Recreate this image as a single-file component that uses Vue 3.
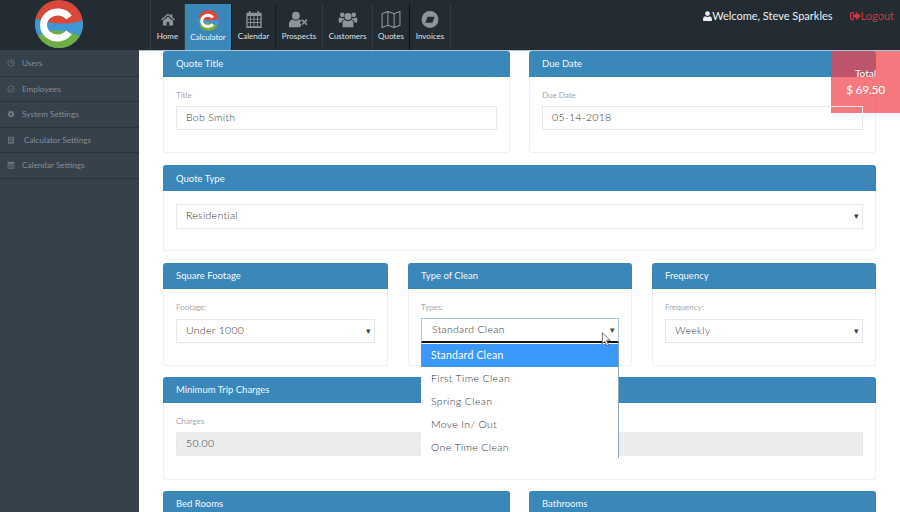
<script setup>
const side = [
  { label: 'Users', icon: 'clock' },
  { label: 'Employees', icon: 'check' },
  { label: 'System Settings', icon: 'gear' },
  { label: 'Calculator Settings', icon: 'calc', wide: true },
  { label: 'Calendar Settings', icon: 'cal' }
]
const nav = [
  { label: 'Home', icon: 'home', w: 34 },
  { label: 'Calculator', icon: 'logo', w: 47, active: true },
  { label: 'Calendar', icon: 'cal', w: 44, dark: true },
  { label: 'Prospects', icon: 'userx', w: 47 },
  { label: 'Customers', icon: 'users', w: 50 },
  { label: 'Quotes', icon: 'map', w: 37, black: true },
  { label: 'Invoices', icon: 'compass', w: 41 }
]
const options = ['Standard Clean', 'First Time Clean', 'Spring Clean', 'Move In/ Out', 'One Time Clean']
</script>

<template>
  <div class="page">
    <header class="top">
      <div class="brand">
        <svg class="logo" viewBox="0 0 48 48">
          <defs>
            <clipPath id="logoClip"><circle cx="24" cy="24" r="24" /></clipPath>
          </defs>
          <g clip-path="url(#logoClip)">
            <rect width="48" height="48" fill="#d9483b" />
            <path d="M0 18 C12 24 34 26 48 20 V48 H0Z" fill="#3e97d3" />
            <path d="M0 38 C14 28 32 28 48 38 V48 H0Z" fill="#6fae45" />
          </g>
          <path d="M34 17.500 A14 13 0 1 0 34 32.500" fill="none" stroke="#fff" stroke-width="7" />
        </svg>
      </div>
      <nav class="nav">
        <div v-for="n in nav" :key="n.label" class="nav-item" :class="{ active: n.active, dark: n.dark, black: n.black }" :style="{ width: n.w + 'px' }">
          <svg v-if="n.icon === 'home'" class="ni" viewBox="-4 -3 32 27"><path d="M12 1 1 10.500l1.300 1.400L12 3.800l9.700 8.100 1.300-1.400-4-3.400V2h-3v2.500zM4 12.500V20h6v-5.500h4V20h6v-7.500L12 6z" /></svg>
          <svg v-else-if="n.icon === 'logo'" class="ni logo-small" viewBox="0 0 48 48">
            <g clip-path="url(#logoClip)">
              <rect width="48" height="48" fill="#d9483b" />
              <path d="M0 18 C12 24 34 26 48 20 V48 H0Z" fill="#3e97d3" />
              <path d="M0 38 C14 28 32 28 48 38 V48 H0Z" fill="#6fae45" />
            </g>
            <path d="M34 17.500 A14 13 0 1 0 34 32.500" fill="none" stroke="#fff" stroke-width="7" />
          </svg>
          <svg v-else-if="n.icon === 'cal'" class="ni" viewBox="0 0 18 20"><path fill-rule="evenodd" d="M3 0h2v2h8V0h2v2h3v18H0V2h3zM1.500 6v3h3V6zm4 0v3h3V6zm4 0v3h3V6zm4 0v3h3V6zm-12 4v3h3v-3zm4 0v3h3v-3zm4 0v3h3v-3zm4 0v3h3v-3zm-12 4v4h3v-4zm4 0v4h3v-4zm4 0v4h3v-4zm4 0v4h3v-4z" /></svg>
          <svg v-else-if="n.icon === 'userx'" class="ni" viewBox="0 -1 26 22"><circle cx="9" cy="5" r="5" /><path d="M0 20v-4c0-4 3-6 5-6 1 1 2.500 1.500 4 1.500s3-.5 4-1.500c1 0 2 .5 3 1.500l-2 3 2 2.500-1.500 3z" /><path d="m16 11 1.500-1.500 2.500 2.500 2.500-2.500L24 11l-2.500 2.500L24 16l-1.500 1.500-2.500-2.500-2.500 2.500L16 16l2.500-2.500z" /></svg>
          <svg v-else-if="n.icon === 'users'" class="ni" viewBox="-1 -1 26 22"><circle cx="12" cy="6" r="4.500" /><circle cx="4.500" cy="4" r="3" /><circle cx="19.500" cy="4" r="3" /><path d="M5 20v-6c0-2.500 1.500-3.500 3-3.500 1 1 2.500 1.500 4 1.500s3-.5 4-1.500c1.500 0 3 1 3 3.500v6z" /><path d="M0 14V9.500C0 8 1 7.500 2 7.500c.7.600 1.600.9 2.500.9h2.200a6 6 0 0 0 .8 2C5 10.500 3.800 12 3.800 14zM24 14V9.500c0-1.500-1-2-2-2-.7.600-1.600.9-2.500.9h-2.200a6 6 0 0 1-.8 2c2.500.1 3.700 1.600 3.700 3.600z" /></svg>
          <svg v-else-if="n.icon === 'map'" class="ni" viewBox="0.500 0.500 21 19"><path d="M1 3.500 7.500 1l7 2.500L21 1v15.500L14.500 19l-7-2.500L1 19zM7.500 1v15.500M14.500 3.500V19" fill="none" stroke="#8f9498" stroke-width="1.200" /></svg>
          <svg v-else-if="n.icon === 'compass'" class="ni" viewBox="1 1 18 18"><path fill-rule="evenodd" d="M10 1a9 9 0 1 1 0 18 9 9 0 0 1 0-18zM7.500 7l-2.500 6.500h7.500L15 7z" /></svg>
          <span>{{ n.label }}</span>
        </div>
      </nav>
      <div class="user">
        <span class="welcome">
          <svg class="ui" viewBox="0 0 14 16"><circle cx="7" cy="4" r="3.800" /><path d="M0 16v-3.500C0 10 2 8.500 3.500 8.500c1 .8 2.200 1.200 3.500 1.200s2.500-.4 3.500-1.200c1.500 0 3.500 1.500 3.500 4V16z" /></svg>Welcome, Steve Sparkles
        </span>
        <span class="logout">
          <svg class="ui" viewBox="0 0 16 14"><path d="M6 1H3a3 3 0 0 0-3 3v6a3 3 0 0 0 3 3h3v-2H3a1 1 0 0 1-1-1V4a1 1 0 0 1 1-1h3z" /><path d="M9 1l7 6-7 6V9.500H4.500v-5H9z" /></svg>Logout
        </span>
      </div>
    </header>

    <div class="body">
      <aside class="side">
        <div v-for="s in side" :key="s.label" class="side-item">
          <svg class="si" viewBox="0 0 12 12">
            <g v-if="s.icon === 'clock'" fill="none" stroke="#69727a" stroke-width="1.300"><circle cx="6" cy="6" r="4.800" /><path d="M6 3v3h2" /></g>
            <g v-else-if="s.icon === 'check'" fill="none" stroke="#69727a" stroke-width="1.300"><circle cx="6" cy="6" r="4.800" /><path d="m3.800 6 1.700 1.700 3-3" /></g>
            <g v-else-if="s.icon === 'gear'" fill="none" stroke="#7b848b"><circle cx="6" cy="6" r="3" stroke-width="2.200" /><path d="M6 .8v2M6 9.200v2M.8 6h2M9.200 6h2M2.300 2.300l1.400 1.400M8.300 8.300l1.400 1.400M2.300 9.700l1.400-1.400M8.300 3.700l1.400-1.400" stroke-width="1.500" /></g>
            <g v-else-if="s.icon === 'calc'" fill="#69727a"><path fill-rule="evenodd" d="M1.500 1h9v10.500h-9zM3 2.500V4h6V2.500zM3 5.500V7h1.500V5.500zm2.300 0V7h1.500V5.500zm2.200 0V7H9V5.500zM3 8v1.500h1.500V8zm2.300 0v1.500h1.500V8zm2.200 0v1.500H9V8z" /></g>
            <g v-else fill="#69727a"><path fill-rule="evenodd" d="M3 .5h1.300v1h3.400v-1H9v1h2v10H1v-10h2zM2.200 4.500v2h2v-2zm2.800 0v2h2v-2zm2.800 0v2h2v-2zM2.200 7.500v2.800h2V7.500zm2.800 0v2.800h2V7.500zm2.800 0v2.800h2V7.500z" /></g>
          </svg>
          <span :class="{ wide: s.wide }">{{ s.label }}</span>
        </div>
      </aside>

      <main class="main">
        <div class="total">
          <span class="total-label">Total</span>
          <span class="total-value">$ 69.50</span>
        </div>

        <div class="row two">
          <section class="panel">
            <h3>Quote Title</h3>
            <div class="pb short">
              <label>Title</label>
              <div class="input">Bob Smith</div>
            </div>
          </section>
          <section class="panel">
            <h3>Due Date</h3>
            <div class="pb short">
              <label>Due Date</label>
              <div class="input">05-14-2018</div>
            </div>
          </section>
        </div>

        <section class="panel type">
          <h3>Quote Type</h3>
          <div class="pb nolabel">
            <div class="input select">Residential<i class="caret">▾</i></div>
          </div>
        </section>

        <div class="row three">
          <section class="panel">
            <h3>Square Footage</h3>
            <div class="pb">
              <label>Footage:</label>
              <div class="input select">Under 1000<i class="caret">▾</i></div>
            </div>
          </section>
          <section class="panel">
            <h3>Type of Clean</h3>
            <div class="pb">
              <label>Types:</label>
              <div class="drop-wrap">
                <div class="input select focus">Standard Clean<i class="caret">▾</i></div>
                <ul class="menu">
                  <li v-for="(o, i) in options" :key="o" :class="{ sel: i === 0 }">{{ o }}</li>
                </ul>
                <svg class="cursor" viewBox="0 0 12 18"><path d="M1 1v13l3-3 2.500 5.500 2-1L6 10h4.500z" fill="#fff" stroke="#555" stroke-width="1" /></svg>
              </div>
            </div>
          </section>
          <section class="panel">
            <h3>Frequency</h3>
            <div class="pb">
              <label>Frequency:</label>
              <div class="input select">Weekly<i class="caret">▾</i></div>
            </div>
          </section>
        </div>

        <section class="panel charges">
          <h3>Minimum Trip Charges</h3>
          <div class="pb">
            <label>Charges</label>
            <div class="input readonly">50.00</div>
          </div>
        </section>

        <div class="row two">
          <section class="panel"><h3>Bed Rooms</h3></section>
          <section class="panel"><h3>Bathrooms</h3></section>
        </div>
      </main>
    </div>
  </div>
</template>

<style>
html, body { margin: 0; background: #fff; }
</style>

<style scoped>
.page {
  width: 900px;
  height: 512px;
  overflow: hidden;
  display: flex;
  flex-direction: column;
  font-family: Lato, "Open Sans", sans-serif;
  color: #555;
}
.top {
  height: 50px;
  flex: none;
  background: #232c33;
  display: flex;
}
.brand { width: 150px; flex: none; padding-left: 35px; box-sizing: border-box; }
.logo { width: 48px; height: 48px; display: block; }
.nav { display: flex; align-items: stretch; height: 50px; border-left: 1px solid #323c44; box-sizing: border-box; }
.nav-item {
  box-sizing: border-box;
  height: 46px;
  margin-top: 4px;
  display: flex;
  flex-direction: column;
  align-items: center;
  justify-content: flex-start;
  padding-top: 7px;
  color: #dfe3e5;
  font-size: 8px;
  border-right: 1px solid #323c44;
  white-space: nowrap;
}
.nav-item.active { background: #3a87ba; border-right-color: #10161a; color: #eef5fa; padding-top: 6px; }
.nav-item.active span { margin-top: 1px; }
.nav-item.dark { border-right-color: #161c21; }
.nav-item.black { border-right-color: #0c1114; }
.nav-item span { margin-top: 3px; line-height: 11px; }
.ni { height: 17px; width: 24px; fill: #8f9498; display: block; flex: none; }
.logo-small { height: 21px; width: 21px; }
.user {
  margin-left: auto;
  padding: 9px 6px 0 0;
  display: flex;
  gap: 17px;
  font-size: 11px;
  line-height: 14px;
  align-items: flex-start;
}
.welcome { color: #eef0f1; display: flex; align-items: center; }
.logout { color: #c9383a; display: flex; align-items: center; }
.ui { width: 9px; height: 10px; fill: currentColor; }
.logout .ui { width: 11px; }

.body { flex: 1; display: flex; min-height: 0; }
.side {
  width: 139px;
  flex: none;
  background: #36414b;
  padding-top: 1px;
  box-sizing: border-box;
}
.side-item {
  height: 25.500px;
  box-sizing: border-box;
  border-bottom: 1px solid #29323a;
  display: flex;
  align-items: center;
  padding-left: 7px;
  gap: 7px;
  font-size: 8.200px;
  color: #858e95;
}
.side-item span.wide { margin-left: 2px; }
.si { width: 8px; height: 8px; flex: none; }

.main {
  flex: 1;
  position: relative;
  padding: 0 24px;
  min-width: 0;
  display: flex;
  flex-direction: column;
  border-top: 1px solid #a9c7d6;
}
.total {
  position: absolute;
  top: 0;
  right: 0;
  width: 69px;
  height: 62px;
  background: rgba(240, 68, 76, 0.72);
  color: #fff;
  display: flex;
  flex-direction: column;
  align-items: center;
  padding-top: 16px;
  box-sizing: border-box;
}
.total-label { font-size: 10px; line-height: 13px; }
.total-value { font-size: 12px; line-height: 16px; margin-top: 2px; letter-spacing: -.3px; }

.row { display: grid; gap: 19px; margin-bottom: 12px; }
.two { grid-template-columns: 347px 347px; }
.three { grid-template-columns: 225px 225px 1fr; margin-bottom: 11px; }
.three > .panel:nth-child(2) { margin-left: 1px; }
.three > .panel:nth-child(3) { margin-left: 1px; }
.three .input { line-height: 21px; }
.panel {
  background: #fff;
  border: 1px solid #eef0f1;
  border-top: 0;
  border-radius: 3px;
  box-sizing: border-box;
}
.panel h3 {
  margin: 0 -1px;
  height: 26px;
  background: #3a87ba;
  color: #f4f8fb;
  font-size: 9.500px;
  font-weight: 400;
  line-height: 26px;
  padding-left: 13px;
  border-radius: 3px 3px 0 0;
}
.type h3 { line-height: 27px; }
.pb { padding: 13px 12px 0; height: 76px; box-sizing: border-box; }
.pb.short { height: 75px; }
.pb.nolabel { padding-top: 13px; height: 59px; }
.pb.nolabel .input { height: 25px; line-height: 21px; }
.type { margin-bottom: 12px; }
.charges { margin-bottom: 11px; }
.panel label { display: block; font-size: 8px; color: #a4a8ac; line-height: 11px; margin-bottom: 5px; }
.three label { margin-bottom: 6px; }
.input {
  height: 24px;
  box-sizing: border-box;
  border: 1px solid #e6e8ea;
  padding-left: 9px;
  font-size: 10.500px;
  font-weight: 300;
  line-height: 21px;
  color: #333;
  position: relative;
  letter-spacing: .3px;
}
.select .caret {
  position: absolute;
  right: 3px;
  top: 0;
  font-style: normal;
  font-size: 9px;
  color: #444;
}
.readonly { background: #eaecee; }
.focus { border-color: #a9c6df; border-bottom: 2px solid #111; height: 25px; margin-top: -1px; line-height: 21px; padding-left: 10px; }
.drop-wrap { position: relative; }
.menu {
  position: absolute;
  left: 0;
  top: 25px;
  width: 198px;
  height: 115px;
  margin: 0;
  padding: 1px 0 0;
  list-style: none;
  background: #fff;
  border-right: 1px solid #8fa6bd;
  box-sizing: border-box;
  overflow: hidden;
  z-index: 3;
  font-size: 10.500px;
  font-weight: 300;
  color: #333;
  letter-spacing: .35px;
}
.menu li { height: 23px; line-height: 22px; padding-left: 10px; }
.menu li.sel { background: #3a98fb; color: #fff; font-weight: 400; letter-spacing: .2px; }
.cursor { position: absolute; left: 180px; top: 14px; width: 11px; height: 15px; z-index: 4; }
</style>
